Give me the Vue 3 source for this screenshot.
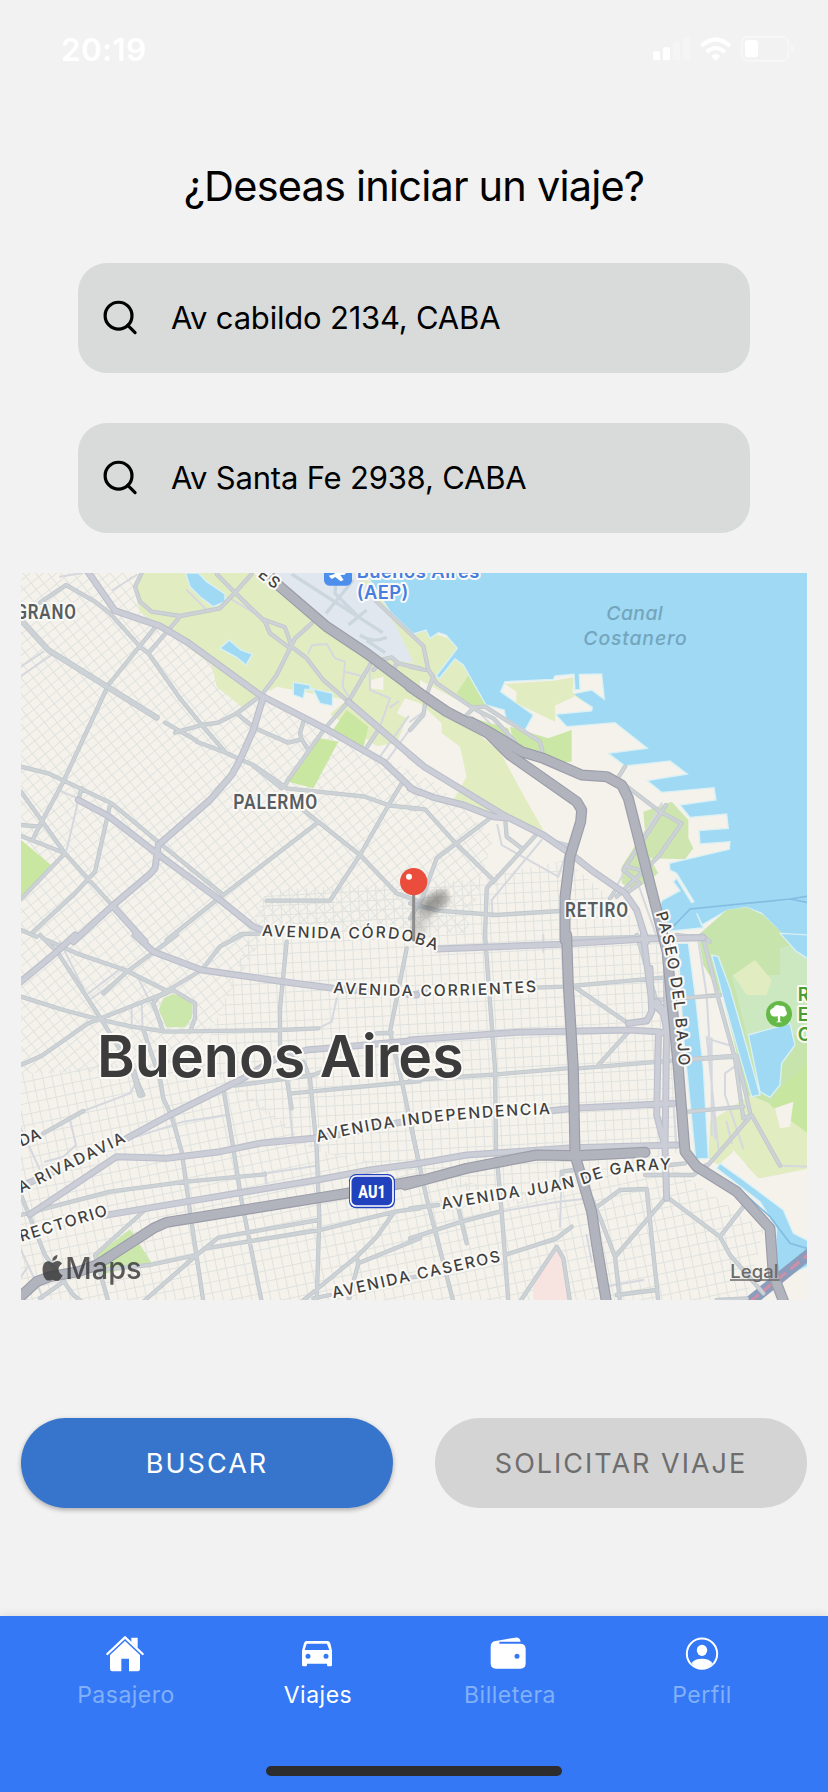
<script setup>
const fields = ['Av cabildo 2134, CABA', 'Av Santa Fe 2938, CABA']

const tabs = [
  { name: 'Pasajero', icon: 'home' },
  { name: 'Viajes', icon: 'car', active: true },
  { name: 'Billetera', icon: 'wallet' },
  { name: 'Perfil', icon: 'person' },
]

// Each map quadrant has its own origin; roads are grouped by importance.
const quadrants = [
  {
    at: 'translate(0 0)',
    thin: 'M175 690L140 840M278 60L350 15M3 290L70 245M3 318L95 255M120 20L187 9M865 250L875 226L920 222L945 265L975 275L968 350L985 378M975 305L1035 320M1048 280L1050 360L1110 385L1080 470M635 88L745 155M1165 440L1080 560M1190 450L1095 580M125 665L175 685M500 60L565 125M1110 412L1135 395',
    minor: 'M435 458L530 512M465 488L545 465L595 458L650 430L720 378M530 515L610 545L665 570L700 585L780 640L800 655L1035 680L1110 707L1200 716M700 588L785 655L800 640M60 98L138 45L225 95L270 130L360 230L385 250L480 385L545 465L615 545M365 9L345 50L360 95L395 125L480 138L600 115L645 68L695 12M590 12L645 68L735 155L750 190L810 235M735 150L795 172L815 230L860 265L910 330L985 395M875 160L825 205L805 245L770 315L725 375M480 140L385 250M405 172L265 345L130 635L65 755L40 805M1050 285L985 395L915 475L800 635M650 430L705 475L805 518L845 508L865 540M850 455L840 490L845 508M3 590L85 610L275 700L420 820L610 975M185 655L175 690M270 705L225 905L165 970L40 1085M3 665L135 850L280 1010M3 765L60 770M3 798L135 850L5 985M895 757L850 720L1020 855L1130 970L1200 995M895 757L590 990L440 1110M1145 640L1105 707L1020 855L930 992L740 992M1035 540L1075 480M1065 90L1210 228L1225 300M1060 300L1090 268L1115 262L1135 280L1200 295M1125 295L1130 275M640 1105L665 1092L740 1090M3 1080L50 1100',
    wide: 'M3 150L85 240L410 443',
    major: 'M200 0L285 122L420 168L500 215L720 375L920 478L1090 575L1180 660L1200 668M730 380L700 480L660 570L635 615L570 690L415 825L405 895L390 912L280 1005L160 1115M175 690L265 738L410 850L600 990L700 1070L740 1085M280 1010L375 1115M985 395L1200 580',
    highway: 'M740 10L780 50L920 170L1040 250L1200 370',
  },
  {
    at: 'translate(1170 0)',
    thin: 'M262 765L275 825L445 920M395 810L245 990L248 1040M445 920L470 845M755 700L600 985M680 930L740 1100M650 970L660 1000M200 420L240 460M0 455L35 430',
    minor: 'M55 300L80 340L185 412L225 410L390 515L398 550M170 435L190 415L250 445L315 515M55 300L70 320L50 375L40 435L0 480M0 715L45 718L135 818L250 930L230 955L225 1100M240 745L80 865L35 990L0 1045M0 1000L85 1022L260 1035L450 1023M375 798L250 935M285 740L290 800L335 835M645 645L750 725L815 760L745 860L620 980M768 705L640 900L690 940L650 970M650 890L690 900M620 955L600 985M645 590L620 630M0 290L45 300M490 1105L880 1098M430 815L470 825L480 840M875 1095L900 1115',
    wide: '',
    major: 'M0 555L45 592L280 735L300 745L400 795L480 850L550 905L645 970L680 1020L710 1115M0 655L70 682L160 705L250 740L300 745',
    highway: 'M0 350L110 425L235 490L300 555L500 695L515 720L512 755L480 860L465 980L465 1110M180 455L245 490L335 545L400 565L515 615L590 620L635 645L655 685L740 1020L775 1160',
  },
  {
    at: 'translate(0 1095)',
    thin: 'M335 270L335 220M365 205L368 285M205 175L310 95M215 190L320 115M350 120L400 220M120 20L205 190M70 595L190 528L330 475L350 440M150 555L168 630L130 665L75 680M350 605L490 560L620 540M3 580L60 705M950 190L935 260L895 280M800 430L818 610M735 710L740 745M740 715L890 692M3 945L70 1090M0 1030L20 1000',
    minor: 'M60 0L115 55L245 255L335 400L370 480M80 15L170 55L315 105L435 165M3 185L130 225L245 255L335 275L440 290L780 285L895 280M3 390L65 362L205 265L420 180L545 105L600 35L665 0M470 0L315 115L250 175M370 285L420 430L430 490L455 545L485 650L510 830L550 1100M610 460L640 640L665 800L725 1100M800 20L780 220L780 330M800 430L815 520M850 380L870 430L890 640L898 850L890 1100M645 452L880 420L930 400M815 475L1200 438M1160 40L1110 290L1150 460L1200 700M1070 295L1115 293M3 840L40 830L270 770L500 740L735 718M3 780L75 960L160 1080L185 1100M70 595L190 528M90 805L30 840M375 825L225 960L265 1100M370 1100L530 960L595 908L895 855M555 940L900 885L1125 830L1200 820M130 1015L390 990L530 960M60 1090L130 1040M845 1100L1010 965L1070 905L1120 835M1010 965L1015 985L985 1100M1015 985L1200 910M880 1090L930 1080M430 290L400 205L415 185L460 165L525 205L525 250L510 290',
    wide: 'M340 410L360 480',
    major: 'M165 0L105 55L3 140M345 0L400 50L545 105L790 140L940 160L1190 180M320 610L450 540L670 430L770 370L860 345L1010 332L1200 315M30 838L290 665L440 670L600 650L720 625L880 610L950 600L1200 550M250 842L500 800L890 735L1050 705L1200 685M3 755L100 710',
    highway: 'M-20 1105L50 1040L90 1025L175 1010L230 990L400 880L440 862L700 820L980 775L1200 735',
  },
  {
    at: 'translate(1170 1095)',
    thin: 'M270 830L445 800L540 790M455 710L450 875M790 500L800 640M890 305L925 640M890 310L955 330M865 20L890 180L915 610M950 560L965 625M980 390L945 415L945 480L1000 640M1115 692L1200 695M400 0L400 50M530 900L545 980M905 310L905 600M560 1060L700 1035',
    minor: 'M225 0L255 400L258 640L275 830L295 1100M380 158L460 155L760 128M500 160L655 265L720 250L740 200M740 200L680 0M565 390L660 285M505 400L750 380L980 365M0 435L260 418L470 400M0 560L50 790L130 1100M0 820L85 810M0 910L155 860L270 830M145 820L170 925M285 960L440 910L485 875M330 1100L440 935L460 970L480 1100M555 820L630 765L710 762L745 1100M620 960L770 785L930 905L1000 815M930 905L960 960L1060 1075M545 790L575 860L615 965L630 1100M620 1080L740 1065M705 720L850 720L890 690M890 695L1025 540L1110 692M1025 540L1000 550L975 370L925 190L880 10L800 0M735 195L840 188L930 180M800 375L980 362L1020 530M835 530L1000 515M780 690L825 685M455 740L455 710L490 705M920 1095L1010 1090M-10 1030L20 1025M0 180L60 160',
    wide: '',
    major: 'M80 42L450 28L705 12L880 8M0 315L320 292L655 285L745 290M700 0L725 200L760 235L770 285L745 300L740 540L765 635L770 790M720 100L725 230L710 258L655 265M740 200L770 240M0 690L170 660L490 638L800 630M415 528L490 520L790 505M765 635L770 300L770 90',
    highway: 'M470 0L475 150L490 400L495 660L545 830L560 930L590 1105M772 60L805 400L825 650L860 695L980 770L1080 880L1090 1020L1125 1110M-15 750L170 700L380 660L500 662L705 652',
  },
]
</script>

<template>
  <main class="screen">
    <header class="status">
      <span class="clock">20:19</span>
      <svg class="indicators" viewBox="0 0 426 72">
        <g fill="#fff">
          <rect x="0" y="43" width="21" height="27" rx="5" />
          <rect x="30" y="31" width="21" height="39" rx="5" />
          <g opacity=".28"><rect x="60" y="15" width="21" height="55" rx="5" /><rect x="91" y="0" width="21" height="70" rx="5" /></g>
          <path d="M188 71l-14-14q14-12 28 0z" />
          <rect x="276" y="9" width="39" height="52" rx="9" />
          <path d="M414 24q9 3 9 12t-9 13z" opacity=".4" />
        </g>
        <g fill="none" stroke="#fff">
          <path d="M161 45q27-24 54 0" stroke-width="12" />
          <path d="M145 27q43-39 86 0" stroke-width="13" />
          <rect x="266" y="0" width="140" height="71" rx="18" stroke-width="6" opacity=".4" />
        </g>
      </svg>
    </header>

    <h1>¿Deseas iniciar un viaje?</h1>

    <section class="fields">
      <label v-for="value in fields" :key="value" class="field">
        <svg class="search" viewBox="0 0 36 36"><circle cx="16" cy="15.6" r="13.8" /><path d="M25.5 25.5l7.5 7.5" /></svg>
        <span>{{ value }}</span>
      </label>
    </section>

    <section class="map">
      <svg viewBox="3 9 2358 2181" width="786" height="727">
        <defs>
          <pattern id="diagonal" width="29" height="25" patternUnits="userSpaceOnUse" patternTransform="rotate(-39)"><path class="street" d="M0 1.5H29M1.5 0V25" /></pattern>
          <pattern id="inclined" width="28" height="32" patternUnits="userSpaceOnUse" patternTransform="rotate(-12)"><path class="street" d="M0 1.5H28M1.5 0V32" /></pattern>
          <pattern id="square" width="26" height="29" patternUnits="userSpaceOnUse" patternTransform="rotate(-3)"><path class="street" d="M0 1.5H26M1.5 0V29" /></pattern>
          <filter id="soft"><feGaussianBlur stdDeviation="13" /></filter>
          <path id="cordoba" d="M725 1097Q930 1110 1080 1103Q1160 1105 1260 1146" />
          <path id="corrientes" d="M939 1269Q1220 1290 1565 1264" />
          <path id="independencia" d="M893 1716Q1180 1645 1600 1632" />
          <path id="garay" d="M1267 1918L1480 1883Q1660 1860 1730 1829Q1830 1796 1965 1800" />
          <path id="caseros" d="M940 2185L1460 2070" />
          <path id="bajo" d="M1907 1030Q1963 1210 1977 1500" />
          <path id="rivadavia" d="M3 1870L325 1712" />
        </defs>
        <rect x="0" y="0" width="2400" height="2200" fill="#f5f2eb" />
        <path fill="url(#diagonal)" d="M3 9H330L580 270L720 390L1250 640L1420 800L1340 1090L740 1080L500 1500L3 1510Z" />
        <path fill="url(#square)" d="M740 960L1340 930L1640 870L1920 1120L2000 1740L1500 1900L880 1740L540 1480Z" />
        <path fill="url(#inclined)" d="M3 1510L550 1460L890 1740L1500 1870L1940 1780L2230 1980L2180 2190H3Z" />

        <g class="parks">
          <path fill="#e2ecc1" d="M370 9H700L1200 350L1440 545L1510 675L1570 780L1490 755L1300 690L1340 620L1320 530L1265 490V460L1200 400L1155 385L1130 430L1160 445L1130 520L1070 528L920 425L880 425L735 355L670 415L590 350L575 285L360 125L340 50Z" />
          <path fill="#e2ecc1" d="M1000 9L1060 40L1110 125L1200 192V400L1000 260Z" />
          <path fill="#f5f2eb" d="M740 370L770 350L980 390L920 440ZM1055 330L1090 320V360L1050 355Z" />
          <path fill="#e0e7ef" d="M740 9H1010L1080 95L1130 170L1180 278L1100 270L920 160Z" />
          <path fill="#c9e7a0" d="M935 485L980 420L1045 470L1030 535ZM900 505L955 515L880 655L805 635ZM3 810L93 885L3 985Z" />
          <path fill="#e2ecc1" d="M1190 175L1350 225L1400 410L1330 400L1200 330Z" />
          <path fill="#cae7a5" d="M1310 370L1350 310L1398 405L1350 408ZM1325 435L1465 475L1485 545ZM1470 470L1585 505L1655 480L1655 575L1560 580L1485 545Z" />
          <path fill="#f5f2eb" d="M1290 395L1305 385L1350 412L1330 430Z" />
          <path fill="#cee5af" d="M1870 725L1955 695L2005 750L2005 805L2020 835L1995 868L1890 865L1915 910L1845 960L1805 940V890L1875 780Z" />
          <path fill="#cbe7ac" d="M416 1320L430 1285L460 1272L495 1278L518 1305L515 1345L495 1372H440ZM222 2060L330 1978L395 2078L240 2115Z" />
        </g>
        <g class="airport"><path d="M815 12L1088 188M918 130L1000 30M945 95L1000 130M985 165L1040 120M950 12L945 70L1010 135" /><path d="M1020 195Q1060 222 1100 202M1040 212L1095 248" /></g>

        <g transform="translate(1170 0)" class="water">
          <path d="M-170 0L-120 30L-60 125L10 192L48 180L60 205L85 188L108 195L142 235L78 318L88 325L135 267L160 285L188 335L228 405L282 420L288 445L345 480L370 435L272 365L285 335L430 328L435 318L492 313L495 360L510 358L508 313L575 312L583 388L545 360L485 372L547 412L545 423L437 433L470 470L615 458L712 535L595 550L645 588L780 573L832 612L712 632L755 667L912 653L918 690L810 705L840 742L950 732L955 775L867 782L870 822L960 815L958 838L778 880L780 900L800 910L852 995L845 998L800 925L790 935L810 962L755 992L745 1025L765 1085L880 1073L860 1030L875 1065L950 1022L1010 1012L1055 1030L1100 1075L1130 1115L1160 1145L1200 1170V0Z" />
        </g>
        <path fill="#e2ecc1" d="M1455 342L1600 332L1660 322L1658 368L1710 410L1605 405L1605 455L1488 400L1490 365Z" />
        <path fill="#f5f2eb" d="M1610 405L1665 378L1712 411L1705 420L1608 428Z" />
        <g class="water"><path d="M497 9H535L560 35L615 72V95L580 110L540 80L510 50ZM600 235L628 210L662 240L697 252L678 285L650 262ZM820 337L870 345V355L938 370L937 408L900 400L880 360L855 358L850 385L820 375Z" /></g>

        <g transform="translate(1170 1095)">
          <path fill="#c6e4ac" d="M865 0L950 -75L1010 -83L1060 -60L1200 75V520L1080 600L1020 520L940 190L880 90Z" />
          <path fill="#cbe8c0" d="M965 120H1110V40L1200 10V300L1010 300Z" />
          <path fill="#e2ecc1" d="M970 120L1035 75L1085 135L1070 180H1010ZM900 560L1020 480L1090 510L1200 590V700L1050 735L970 650L925 690L895 670Z" />
          <path fill="#c7e6a0" d="M1120 450L1200 380V600L1080 510Z" />
          <path fill="#f5f2eb" d="M1095 520L1150 500L1140 575L1110 580ZM965 640L1010 690L1000 710ZM1000 740L1200 700V900L1130 850Z" />
          <g class="water">
            <path d="M802 25H835L845 100L858 200L880 400L895 670L857 672L840 500L820 300L808 100ZM905 60L925 65L960 160L1000 300L1050 480L1025 485L985 350L940 190ZM1015 300L1140 265L1155 330L1115 385L1110 450L1080 487L1050 470ZM930 685L1000 735L1120 825L1150 895L1200 920V990L1100 1040L1020 1110L990 1110L1090 1020L1100 880L1050 800L920 700ZM1110 -5L1200 0V75L1160 50Z" />
          </g>
          <path fill="#f7e3df" d="M437 940L460 975L477 1100H370V1045Z" />
          <path d="M1020 1100L1200 955" stroke="#8b9dbb" stroke-width="34" fill="none" />
          <path d="M1020 1100L1200 955" stroke="#cf8fa8" stroke-width="9" stroke-dasharray="34 18" fill="none" />
        </g>
        <path class="ferry" d="M1950 1080L2010 1017L2310 987L2361 997M2361 979L2310 987M2150 1850L2250 1940L2310 2020L2361 2035" />

        <g v-for="kind in ['thin', 'minor', 'wide', 'major', 'highway']" :key="kind" :class="kind">
          <g class="casing"><path v-for="q in quadrants" :key="q.at" :transform="q.at" :d="q[kind]" /></g>
          <g class="body"><path v-for="q in quadrants" :key="q.at" :transform="q.at" :d="q[kind]" /></g>
        </g>

        <g class="labels">
          <g class="district">
            <text x="-42" y="148" textLength="212" lengthAdjust="spacingAndGlyphs">LGRANO</text>
            <text x="640" y="718" textLength="254" lengthAdjust="spacingAndGlyphs">PALERMO</text>
            <text x="1635" y="1041" textLength="192" lengthAdjust="spacingAndGlyphs">RETIRO</text>
          </g>
          <g class="road">
            <text transform="translate(712 18) rotate(38)" textLength="66">ES</text>
            <text><textPath href="#cordoba" textLength="528">AVENIDA CÓRDOBA</textPath></text>
            <text><textPath href="#corrientes" textLength="611">AVENIDA CORRIENTES</textPath></text>
            <text><textPath href="#independencia" textLength="704">AVENIDA INDEPENDENCIA</textPath></text>
            <text><textPath href="#garay" textLength="697">AVENIDA JUAN DE GARAY</textPath></text>
            <text><textPath href="#caseros" textLength="515">AVENIDA CASEROS</textPath></text>
            <text><textPath href="#bajo" textLength="464">PASEO DEL BAJO</textPath></text>
            <text><textPath href="#rivadavia" textLength="352">A RIVADAVIA</textPath></text>
            <text transform="translate(4 1730) rotate(-22)" textLength="67">DA</text>
            <text transform="translate(4 2015) rotate(-17)" textLength="272">RECTORIO</text>
          </g>
          <g class="airport-name">
            <rect x="912" y="-37" width="84" height="84" rx="16" fill="#4f8fec" />
            <path d="M926 17L945 12L938 4L986 0L974 14L961 15L971 30L962 34L946 21L935 27Z" fill="#fff" />
            <text x="1010" y="24" textLength="368">Buenos Aires</text>
            <text x="1010" y="86" textLength="155">(AEP)</text>
          </g>
          <g class="channel">
            <text x="1759" y="150" textLength="169">Canal</text>
            <text x="1690" y="225" textLength="310">Costanero</text>
          </g>
          <text class="city" x="231" y="1521" textLength="1100" lengthAdjust="spacingAndGlyphs">Buenos Aires</text>
          <g class="reserve">
            <circle cx="2277" cy="1332" r="39" fill="#65b947" />
            <path d="M2255 1337Q2243 1320 2260 1314Q2266 1300 2280 1307Q2297 1306 2297 1320Q2307 1335 2291 1340L2281 1338L2280 1354L2287 1357H2267L2274 1354L2273 1338Q2265 1342 2255 1337Z" fill="#fff" />
            <text x="2333" y="1292">R</text><text x="2333" y="1353">E</text><text x="2333" y="1413">O</text>
          </g>
        </g>
        <g>
          <rect x="987" y="1812" width="138" height="103" rx="22" fill="#2242bd" />
          <rect x="992" y="1818" width="127" height="90" rx="17" fill="none" stroke="#fff" stroke-width="5" />
          <text class="shield" x="1015" y="1884" textLength="82" lengthAdjust="spacingAndGlyphs">AU1</text>
        </g>
        <path d="M1180 1100Q1200 1010 1280 970" fill="none" stroke="#555" stroke-width="50" opacity=".22" filter="url(#soft)" />
        <ellipse cx="1242" cy="998" rx="46" ry="24" transform="rotate(-32 1242 998)" fill="#333" opacity=".36" filter="url(#soft)" />
        <path d="M1181 965V1110" stroke="#8d8d8d" stroke-width="9" stroke-linecap="round" />
        <circle cx="1181" cy="935" r="41" fill="#eb4d3d" /><circle cx="1167" cy="920" r="9" fill="#fff" />
        <g class="apple">
          <path d="M97 2073Q97 2058 112 2054Q114 2069 97 2073ZM98 2079Q108 2071 118 2074Q124 2077 126 2081Q114 2089 116 2101Q118 2112 128 2116Q124 2127 116 2132Q110 2134 98 2129Q86 2134 79 2130Q66 2118 68 2092Q72 2072 87 2074Z" />
          <text x="136" y="2128" textLength="229" lengthAdjust="spacingAndGlyphs">Maps</text>
        </g>
        <text class="legal" x="2131" y="2124" textLength="144" lengthAdjust="spacingAndGlyphs">Legal</text>
        <path d="M2130 2130H2279" stroke="#6a6a6a" stroke-width="5" />
      </svg>
    </section>

    <section class="actions">
      <button class="primary">BUSCAR</button>
      <button class="disabled" disabled>SOLICITAR VIAJE</button>
    </section>

    <nav class="tabbar">
      <div class="tabs">
        <a v-for="tab in tabs" :key="tab.name" class="tab" :class="{ active: tab.active }">
          <svg viewBox="0 0 120 120" class="icon" :class="tab.icon">
            <template v-if="tab.icon === 'home'">
              <path d="M7 63L60 13L113 63" fill="none" stroke="#fff" stroke-width="7" stroke-linecap="round" stroke-linejoin="round" />
              <path d="M79 14H98V45L79 27ZM60 24L105 66V108Q105 115 98 115H72V77H49V115H22Q15 115 15 108V66Z" />
            </template>
            <path v-else-if="tab.icon === 'car'" fill-rule="evenodd" d="M29 24H91Q97 24 100 31L105 53V96Q105 100 101 100H93Q90 100 90 96V92H30V96Q30 100 26 100H19Q15 100 15 96V53L21 31Q23 24 29 24ZM31 32Q29 32 28 35L23 51H97L91 35Q90 32 88 32ZM33 62A7.5 7.5 0 1 0 33 77A7.5 7.5 0 1 0 33 62ZM87 62A7.5 7.5 0 1 0 87 77A7.5 7.5 0 1 0 87 62Z" />
            <path v-else-if="tab.icon === 'wallet'" fill-rule="evenodd" d="M23 24L81 14Q95 11 98 26H34V32H96Q113 32 113 48V91Q113 107 97 107H24Q8 107 8 91V42Q8 26 23 24ZM87 62A7.5 7.5 0 1 0 87 77A7.5 7.5 0 1 0 87 62Z" />
            <template v-else>
              <circle cx="60" cy="62" r="45.5" fill="none" stroke="#fff" stroke-width="6" />
              <ellipse cx="60" cy="52" rx="15.5" ry="17" />
              <path d="M29 90Q38 77 60 77T91 90Q80 107 60 107T29 90Z" />
            </template>
          </svg>
          <span>{{ tab.name }}</span>
        </a>
      </div>
      <div class="home-indicator"></div>
    </nav>
  </main>
</template>

<style>
body { margin: 0; background: #f2f2f2; }
</style>

<style scoped>
.screen { width: 828px; height: 1792px; overflow: hidden; display: flex; flex-direction: column; background: #f2f2f2; font-family: Inter, "Liberation Sans", sans-serif; }
.status { height: 100px; box-sizing: border-box; padding: 31px 36px 0 61px; display: flex; justify-content: space-between; align-items: flex-start; color: #fff; }
.clock { font-size: 31.5px; line-height: 38px; font-weight: 600; letter-spacing: .3px; }
.indicators { width: 142px; height: 24px; margin-top: 6px; margin-right: -3px; overflow: visible; }
h1 { margin: 58px 0 0; height: 56px; text-align: center; font-size: 41.5px; line-height: 56px; font-weight: 400; letter-spacing: -.8px; color: #000; }
.fields { margin: 49px 78px 0; display: grid; gap: 50px; }
.field { height: 110px; display: flex; align-items: center; border-radius: 29px; background: #d9dbda; font-size: 31px; letter-spacing: -.2px; }
.field span { white-space: nowrap; padding-bottom: 2px; }
.search { width: 35px; height: 36px; margin-left: 25px; margin-right: 33px; fill: none; stroke: #000; stroke-width: 3.3; stroke-linecap: round; }
.map { width: 786px; height: 727px; margin: 40px 21px 0; overflow: hidden; }
.map svg { display: block; }
.actions { margin: 118px 21px 0; display: grid; grid-template-columns: 1fr 1fr; gap: 42px; }
button { height: 90px; border: 0; border-radius: 45px; padding: 1px 0 0; font: 400 27px/89px Inter, sans-serif; letter-spacing: 2px; }
.primary { background: #3774cc; color: #fff; box-shadow: 0 2px 5px rgba(0, 0, 0, .3); }
.disabled { background: #d4d4d4; color: #6d6d6d; }
.tabbar { margin-top: 108px; height: 176px; background: #3478f6; box-shadow: 0 -1px 9px rgba(0, 0, 0, .1); display: flex; flex-direction: column; align-items: center; }
.tabs { width: 768px; height: 150px; display: grid; grid-template-columns: repeat(4, 1fr); }
.tab { display: flex; flex-direction: column; align-items: center; padding-top: 17px; color: #81b0f8; font-size: 23px; line-height: 30px; letter-spacing: .5px; }
.tab.active { color: #fff; }
.icon { width: 40px; height: 40px; fill: #fff; margin-bottom: 7px; }
.home, .car { margin-right: 2px; }
.wallet { margin-right: 5px; }
.home-indicator { width: 296px; height: 10px; border-radius: 5px; background: #2d2d2d; }

.street { fill: none; stroke: #dfe2df; stroke-width: 3; }
.water path { fill: #9fd9f3; stroke: #d9f0f5; stroke-width: 4; }
.airport { fill: none; stroke: #cbd6df; stroke-width: 10; }
.ferry { fill: none; stroke: #83bde2; stroke-width: 5; }
.casing, .body { fill: none; stroke-linejoin: round; stroke-linecap: round; }
.thin .casing { display: none; }
.thin .body { stroke: #d6d8df; stroke-width: 6; }
.minor .casing { stroke: #c1c8cc; stroke-width: 13; }
.minor .body { stroke: #cdd2d6; stroke-width: 8; }
.wide .casing { stroke: #c1c8cc; stroke-width: 18; }
.wide .body { stroke: #cdd2d6; stroke-width: 13; }
.major .casing { stroke: #bdc0cc; stroke-width: 21; }
.major .body { stroke: #cbced7; stroke-width: 14; }
.highway .casing { stroke: #9b9da9; stroke-width: 33; }
.highway .body { stroke: #b1b3bd; stroke-width: 26; }

.labels text { paint-order: stroke; stroke: #fbfaf7; stroke-width: 12; stroke-linejoin: round; }
.labels .district { font: 600 62px Roboto, sans-serif; letter-spacing: 3px; fill: #585d5f; }
.labels .road { font: 500 47px Inter, sans-serif; fill: #404040; }
.labels .airport-name { font: 600 55px Inter, sans-serif; fill: #487fde; }
.labels .channel { font: italic 500 58px Inter, sans-serif; fill: #74a5bd; }
.labels .channel text { stroke: none; }
.labels .city { font: 600 175px Inter, sans-serif; fill: #3c3c3c; }
.labels .reserve { font: 600 55px Inter, sans-serif; fill: #4b9b35; }
.shield { font: 800 56px Roboto, sans-serif; fill: #fff; }
.apple { fill: #343434; opacity: .8; font: 500 90px Inter, sans-serif; }
.legal { font: 500 54px Inter, sans-serif; fill: #6a6a6a; }
</style>
